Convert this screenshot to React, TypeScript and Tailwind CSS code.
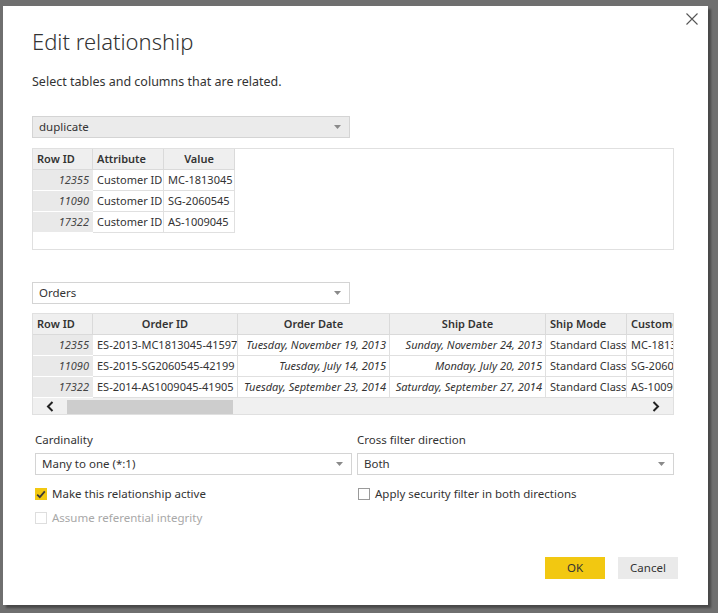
import React from "react";

const font = { fontFamily: '"Noto Sans", "Open Sans", Arial, sans-serif' };

function Chevron() {
  return (
    <svg width="7" height="4" viewBox="0 0 7 4">
      <path d="M0 0 H7 L3.5 4 Z" fill="#8a8a8a" />
    </svg>
  );
}

function Select({ label, gray, w }: { label: string; gray?: boolean; w: string }) {
  return (
    <div
      className={`${w} h-[22px] flex items-center justify-between pl-[6px] pr-[8px] border border-[#d4d4d4] ${gray ? "bg-[#ebebeb]" : "bg-white"} text-[11.5px] text-[#333]`}
    >
      <span>{label}</span>
      <Chevron />
    </div>
  );
}

const th = "h-[21px] bg-[#efefef] border-r border-b border-[#dadada] font-semibold text-[11px] text-[#333] flex items-center shrink-0 whitespace-nowrap overflow-hidden";
const tdId = "h-[21px] bg-[#e9e9e9] border-b border-white text-[11px] italic text-[#444] flex items-center justify-end pr-[4px] shrink-0";
const td = "h-[21px] bg-white border-r border-b border-[#e0e0e0] text-[11px] text-[#333] flex items-center shrink-0 whitespace-nowrap overflow-hidden";

function Check({ checked, disabled }: { checked?: boolean; disabled?: boolean }) {
  if (checked) {
    return (
      <div className="w-[12px] h-[12px] bg-[#f2c811] flex items-center justify-center shrink-0">
        <svg width="10" height="9" viewBox="0 0 10 9">
          <path d="M1.2 4.6 L3.8 7.2 L8.8 1.4" stroke="#3a3a3a" strokeWidth="1.8" fill="none" />
        </svg>
      </div>
    );
  }
  return <div className={`w-[12px] h-[12px] border shrink-0 ${disabled ? "border-[#dedede]" : "border-[#9a9a9a]"} bg-white`} />;
}

export default function App() {
  const dup = [
    ["12355", "Customer ID", "MC-1813045"],
    ["11090", "Customer ID", "SG-2060545"],
    ["17322", "Customer ID", "AS-1009045"],
  ];
  const orders = [
    ["12355", "ES-2013-MC1813045-41597", "Tuesday, November 19, 2013", "Sunday, November 24, 2013", "Standard Class", "MC-18130"],
    ["11090", "ES-2015-SG2060545-42199", "Tuesday, July 14, 2015", "Monday, July 20, 2015", "Standard Class", "SG-20605"],
    ["17322", "ES-2014-AS1009045-41905", "Tuesday, September 23, 2014", "Saturday, September 27, 2014", "Standard Class", "AS-10090"],
  ];
  return (
    <div className="w-[718px] h-[613px] bg-[#6f6f6f] pt-[6px] pl-[3px] overflow-hidden" style={font}>
      <div className="relative w-[705px] h-[599px] bg-white shadow-[3px_3px_2px_rgba(0,0,0,0.35)] pl-[29px] flex flex-col">
        <button className="absolute top-[3px] right-[6px] w-[20px] h-[20px] flex items-center justify-center">
          <svg width="12" height="12" viewBox="0 0 12 12">
            <path d="M0.5 0.5 L11.5 11.5 M11.5 0.5 L0.5 11.5" stroke="#555" strokeWidth="1.1" />
          </svg>
        </button>
        <div className="mt-[20px] text-[22px] font-light text-[#333] leading-[30px]">Edit relationship</div>
        <div className="mt-[18px] text-[12.5px] text-[#333] leading-[16px]">Select tables and columns that are related.</div>

        <div className="mt-[26px]">
          <Select label="duplicate" gray w="w-[318px]" />
        </div>

        <div className="mt-[10px] w-[642px] h-[102px] border border-[#e0e0e0]">
          <div className="flex">
            <div className={`${th} w-[60px] pl-[4px]`}>Row ID</div>
            <div className={`${th} w-[71px] pl-[4px]`}>Attribute</div>
            <div className={`${th} w-[71px] justify-center`}>Value</div>
          </div>
          {dup.map((r) => (
            <div className="flex" key={r[0]}>
              <div className={`${tdId} w-[60px]`}>{r[0]}</div>
              <div className={`${td} w-[71px] pl-[4px]`}>{r[1]}</div>
              <div className={`${td} w-[71px] pl-[4px]`}>{r[2]}</div>
            </div>
          ))}
        </div>

        <div className="mt-[32px]">
          <Select label="Orders" w="w-[318px]" />
        </div>

        <div className="mt-[9px] w-[642px] h-[102px] border border-[#e0e0e0] overflow-hidden">
          <div className="flex">
            <div className={`${th} w-[60px] pl-[4px]`}>Row ID</div>
            <div className={`${th} w-[145px] justify-center`}>Order ID</div>
            <div className={`${th} w-[152px] justify-center`}>Order Date</div>
            <div className={`${th} w-[156px] justify-center`}>Ship Date</div>
            <div className={`${th} w-[81px] pl-[4px]`}>Ship Mode</div>
            <div className={`${th} w-[60px] pl-[4px]`}>Customer ID</div>
          </div>
          {orders.map((r) => (
            <div className="flex" key={r[0]}>
              <div className={`${tdId} w-[60px]`}>{r[0]}</div>
              <div className={`${td} w-[145px] pl-[4px]`}>{r[1]}</div>
              <div className={`${td} w-[152px] justify-end pr-[3px] italic`}>{r[2]}</div>
              <div className={`${td} w-[156px] justify-end pr-[3px] italic`}>{r[3]}</div>
              <div className={`${td} w-[81px] pl-[4px]`}>{r[4]}</div>
              <div className={`${td} w-[60px] pl-[4px]`}>{r[5]}</div>
            </div>
          ))}
          <div className="h-[17px] bg-[#f0f0f0] flex items-center">
            <div className="w-[34px] flex items-center justify-center">
              <svg width="8" height="11" viewBox="0 0 8 11">
                <path d="M6.5 1 L2 5.5 L6.5 10" stroke="#222" strokeWidth="2" fill="none" />
              </svg>
            </div>
            <div className="w-[166px] h-[14px] bg-[#cdcdcd]" />
            <div className="flex-1" />
            <div className="w-[34px] flex items-center justify-center">
              <svg width="8" height="11" viewBox="0 0 8 11">
                <path d="M1.5 1 L6 5.5 L1.5 10" stroke="#222" strokeWidth="2" fill="none" />
              </svg>
            </div>
          </div>
        </div>

        <div className="mt-[17px] flex gap-[5px] pl-[3px]">
          <div className="w-[317px]">
            <div className="text-[11.5px] text-[#333] leading-[16px]">Cardinality</div>
            <div className="mt-[5px]">
              <Select label="Many to one (*:1)" w="w-[317px]" />
            </div>
            <div className="mt-[11px] h-[16px] flex items-center gap-[5px] text-[11.5px] text-[#333]">
              <Check checked />
              <span>Make this relationship active</span>
            </div>
            <div className="mt-[8px] h-[16px] flex items-center gap-[5px] text-[11.5px] text-[#a8a8a8]">
              <Check disabled />
              <span>Assume referential integrity</span>
            </div>
          </div>
          <div className="w-[317px]">
            <div className="text-[11.5px] text-[#333] leading-[16px]">Cross filter direction</div>
            <div className="mt-[5px]">
              <Select label="Both" w="w-[317px]" />
            </div>
            <div className="mt-[11px] h-[16px] flex items-center gap-[5px] text-[11.5px] text-[#333] pl-[1px]">
              <Check />
              <span>Apply security filter in both directions</span>
            </div>
          </div>
        </div>

        <div className="mt-auto mb-[26px] flex justify-end gap-[13px] pr-[30px]">
          <button className="w-[60px] h-[22px] bg-[#f2c811] text-[11.5px] text-[#333]">OK</button>
          <button className="w-[60px] h-[22px] bg-[#eaeaea] text-[11.5px] text-[#333]">Cancel</button>
        </div>
      </div>
    </div>
  );
}
